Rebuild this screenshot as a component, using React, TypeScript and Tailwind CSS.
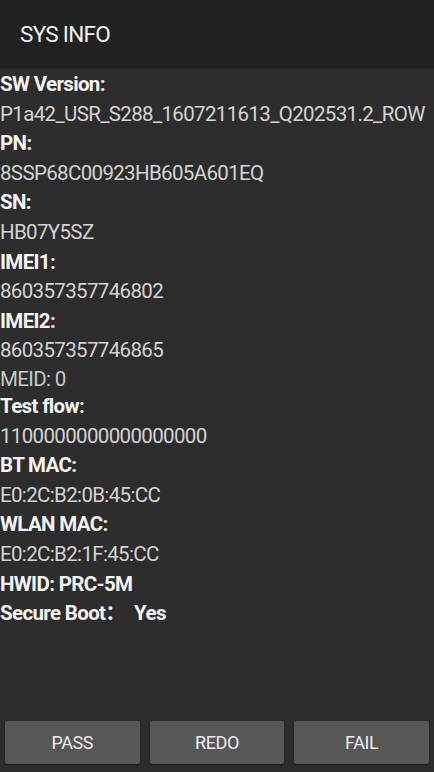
const rows: { label: string; value?: string; extra?: string }[] = [
  { label: "SW Version:", value: "P1a42_USR_S288_1607211613_Q202531.2_ROW" },
  { label: "PN:", value: "8SSP68C00923HB605A601EQ" },
  { label: "SN:", value: "HB07Y5SZ" },
  { label: "IMEI1:", value: "860357357746802" },
  { label: "IMEI2:", value: "860357357746865", extra: "MEID: 0" },
  { label: "Test flow:", value: "1100000000000000000" },
  { label: "BT MAC:", value: "E0:2C:B2:0B:45:CC" },
  { label: "WLAN MAC:", value: "E0:2C:B2:1F:45:CC" },
  { label: "HWID: PRC-5M" },
];

export default function App() {
  return (
    <div
      className="flex h-[772px] w-[434px] flex-col bg-[#2d2d2d]"
      style={{ fontFamily: "Roboto, 'Noto Sans CJK SC', sans-serif" }}
    >
      <header className="flex h-[69px] shrink-0 items-center bg-[#212121] pl-5">
        <h1 className="text-[22.5px] tracking-[-0.7px] text-[#f2f2f2]">SYS INFO</h1>
      </header>

      <main className="flex-1 pt-[1px] tracking-[-0.65px]">
        {rows.map((row) => (
          <div key={row.label}>
            <div className="h-[29.6px] text-[20.5px] font-bold leading-[29.6px] text-[#f4f4f4]">
              {row.label}
            </div>
            {row.value && (
              <div className="h-[29.6px] text-[20.5px] leading-[29.6px] text-[#d4d4d4]">
                {row.value}
              </div>
            )}
            {row.extra && (
              <div className="h-[26px] text-[20.5px] leading-[26px] text-[#c8c8c8]">
                {row.extra}
              </div>
            )}
          </div>
        ))}
        <div className="h-[29.6px] text-[20.5px] font-bold leading-[29.6px] text-[#f4f4f4]">
          Secure Boot：&nbsp;&nbsp;Yes
        </div>
      </main>

      <footer className="flex gap-[10px] px-[5px] pb-[8px]">
        {["PASS", "REDO", "FAIL"].map((b) => (
          <button
            key={b}
            className="h-[43px] flex-1 rounded-[2px] bg-[#575757] text-[18px] tracking-[-0.4px] text-[#ececec] shadow-[0_1px_2px_rgba(0,0,0,0.5)]"
          >
            {b}
          </button>
        ))}
      </footer>
    </div>
  );
}
